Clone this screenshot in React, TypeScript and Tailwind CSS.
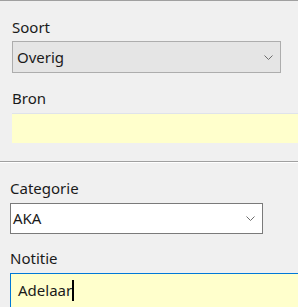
import React from 'react';

function Chevron() {
  return (
    <svg width="9" height="5" viewBox="0 0 9 5" className="shrink-0">
      <path d="M0.5 0.5 L4.5 4.5 L8.5 0.5" fill="none" stroke="#6d6d6d" strokeWidth="1" />
    </svg>
  );
}

export default function App() {
  return (
    <div
      className="w-[298px] h-[307px] overflow-hidden bg-[#f0f0f0] border-t border-[#a0a0a0] text-[15px] text-[#1a1a1a]"
      style={{ fontFamily: '"Noto Sans", "Open Sans", sans-serif' }}
    >
      {/* bovenste groep */}
      <div className="pl-[12px] pt-[14px]">
        <div className="h-[26px] leading-[24px]">Soort</div>
        <div className="w-[269px] h-[32px] flex items-center justify-between border border-[#adadad] bg-[#e5e5e5] pl-[4px] pr-[7px]">
          <span>Overig</span>
          <Chevron />
        </div>
        <div className="h-[40px] pt-[13px] leading-[24px]">Bron</div>
        <div className="h-[30px] border-t border-[#dfe3ea] bg-[#ffffcc]" />
      </div>
      <div className="mt-[18px] h-[2px] border-t border-[#a0a0a0] bg-white" />
      <div className="pl-[10px] pt-[13px]">
        <div className="h-[27px] leading-[24px]">Categorie</div>
        <div className="w-[253px] h-[31px] flex items-center justify-between border border-[#7a7a7a] bg-white pl-[2px] pr-[7px]">
          <span>AKA</span>
          <Chevron />
        </div>
        <div className="h-[39px] pt-[12px] leading-[24px]">Notitie</div>
        <div className="h-[40px] border border-[#0078d7] border-r-0 bg-[#ffffcc] pl-[7px] pt-[5px] flex items-start">
          <span className="leading-[22px]">Adelaar</span>
          <span className="w-[2px] h-[21px] mt-[1px] bg-black" />
        </div>
      </div>
    </div>
  );
}
